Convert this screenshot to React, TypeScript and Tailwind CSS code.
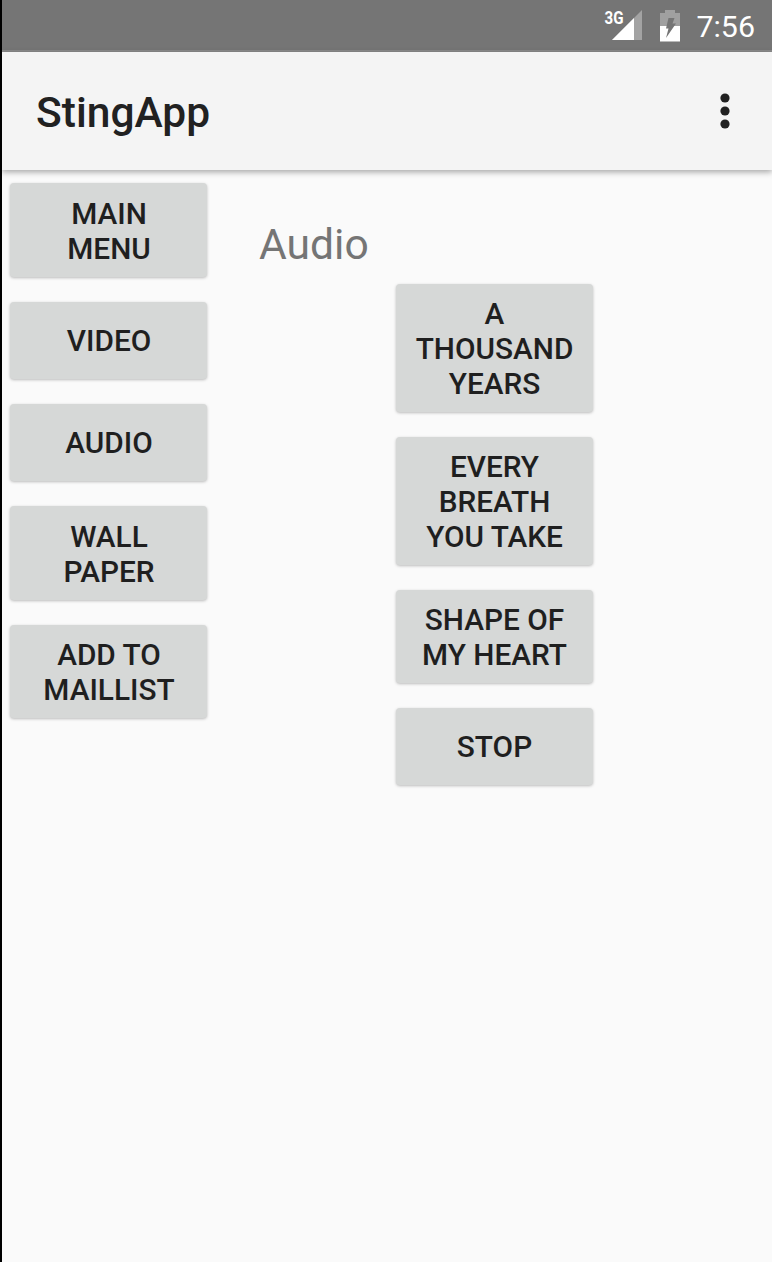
type ButtonSpec = { lines: string[]; size: string };

const menuButtons: ButtonSpec[] = [
  { lines: ['MAIN', 'MENU'], size: 'h-[94px] mb-[25px] pt-[1px] pl-[1px]' },
  { lines: ['VIDEO'], size: 'h-[77px] mb-[25px] pl-[1px]' },
  { lines: ['AUDIO'], size: 'h-[77px] mb-[25px] pl-[1px]' },
  { lines: ['WALL', 'PAPER'], size: 'h-[94px] mb-[25px] pt-[1px] pl-[1px]' },
  { lines: ['ADD TO', 'MAILLIST'], size: 'h-[93px] pl-[1px]' },
];

const songButtons: ButtonSpec[] = [
  { lines: ['A', 'THOUSAND', 'YEARS'], size: 'h-[128px] mb-[25px]' },
  { lines: ['EVERY', 'BREATH', 'YOU TAKE'], size: 'h-[128px] mb-[25px]' },
  { lines: ['SHAPE OF', 'MY HEART'], size: 'h-[93px] mb-[25px]' },
  { lines: ['STOP'], size: 'h-[77px]' },
];

function RaisedButton({ lines, size }: ButtonSpec) {
  return (
    <button
      className={`flex w-[197px] flex-col items-center justify-center rounded-[4px] bg-[#d6d8d7] text-[29.8px] leading-[35px] font-medium text-[#1f1f1f] shadow-[0_1px_3px_rgba(0,0,0,0.25)] ${size}`}
    >
      {lines.map((line) => (
        <span key={line} className="block whitespace-nowrap">
          {line}
        </span>
      ))}
    </button>
  );
}

function StatusBar() {
  return (
    <div className="flex h-[52px] shrink-0 items-start justify-end border-b-2 border-[#8b8b8b] bg-[#757575] text-white">
      <svg className="mt-[4px] h-[38px] w-[44px]" viewBox="-4 -4 44 38">
        <path d="M10 32L40 2V32Z" fill="#a3a3a3" />
        <path d="M10 32L32 10V32Z" fill="#fff" />
        <text x="2.5" y="16" fontSize="18" fontWeight="700" fontFamily="Roboto, sans-serif" textLength="19" lengthAdjust="spacingAndGlyphs" fill="#fff" stroke="#757575" strokeWidth="2" paintOrder="stroke">
          3G
        </text>
      </svg>
      <svg className="mt-[10px] ml-[18px] h-[32px] w-[21px]" viewBox="0 0 21 32">
        <path d="M5 0H15V3H20V16H0V3H5Z" fill="#a0a0a0" />
        <path d="M0 16H20V31.5H0Z" fill="#fff" />
        <path d="M8.5 8H14.5L12.5 13.5H16L6 28L8.5 18.5H6Z" fill="#757575" />
      </svg>
      <span className="mt-[9px] mr-[17px] ml-[14px] w-[60px] text-right text-[30.4px] leading-[36px] whitespace-nowrap">7:56</span>
    </div>
  );
}

export default function App() {
  return (
    <div className="flex h-[1262px] w-[772px] flex-col overflow-hidden border-l-2 border-black bg-[#fafafa] font-['Roboto',sans-serif]">
      <StatusBar />
      <header className="flex h-[118px] shrink-0 items-center justify-between bg-[#f4f4f4] pr-[41px] pl-[34px] shadow-[0_2px_6px_rgba(0,0,0,0.35)]">
        <h1 className="mt-[3px] text-[42.5px] leading-[50px] font-medium text-[#212121]">StingApp</h1>
        <svg className="h-[36px] w-[12px]" viewBox="0 0 12 36" fill="#212121">
          <circle cx="6" cy="5" r="4.6" />
          <circle cx="6" cy="18" r="4.6" />
          <circle cx="6" cy="31" r="4.6" />
        </svg>
      </header>
      <main className="flex items-start pt-[13px] pl-[8px]">
        <nav className="flex flex-col">
          {menuButtons.map((button) => (
            <RaisedButton key={button.lines.join(' ')} {...button} />
          ))}
        </nav>
        <section className="ml-[52px] flex flex-col pt-[36px]">
          <h2 className="h-[65px] text-[42.6px] leading-[50px] font-normal text-[#757575]">Audio</h2>
          <div className="ml-[137px] flex flex-col">
            {songButtons.map((button) => (
              <RaisedButton key={button.lines.join(' ')} {...button} />
            ))}
          </div>
        </section>
      </main>
    </div>
  );
}
